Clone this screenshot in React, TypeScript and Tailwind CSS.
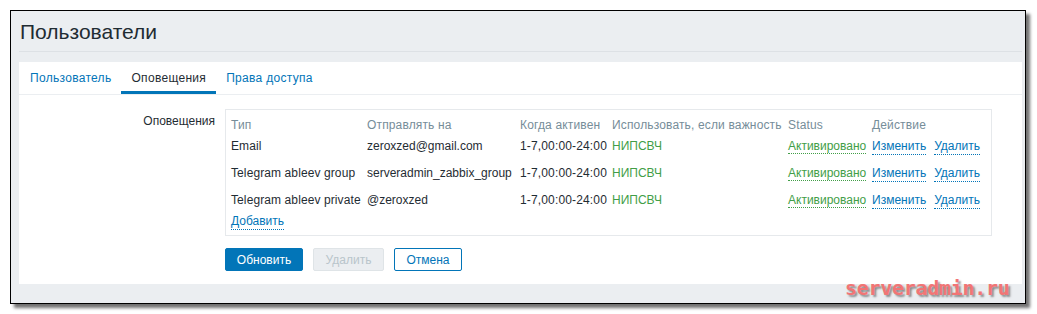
import React from "react";

const rows = [
  { type: "Email", to: "zeroxzed@gmail.com" },
  { type: "Telegram ableev group", to: "serveradmin_zabbix_group" },
  { type: "Telegram ableev private", to: "@zeroxzed" },
];

const dotted = "border-b border-dotted";

export default function App() {
  return (
    <div
      className="relative w-[1037px] h-[314px] bg-white pt-[10px] pl-[10px] text-[12px] text-[#1f2c33]"
      style={{ fontFamily: '"Liberation Sans", Arial, sans-serif' }}
    >
      <div className="w-[1016px] h-[294px] border border-black bg-[#ebeef1] shadow-[4px_4px_3px_rgba(0,0,0,0.55)] pl-[8px] pr-[3px]">
        <div className="h-[41px] flex items-center border-b border-[#dde1e5] pl-[1px]">
          <h1 className="text-[21px] leading-none text-[#1f2c33]">Пользователи</h1>
        </div>
        <div className="mt-[10px] bg-white h-[222px]">
          <div className="flex h-[33px] border-b border-[#ebeef1] pl-[1px] tracking-[0.3px]">
            <div className="px-[10px] flex items-center text-[#0275b8]">Пользователь</div>
            <div className="px-[10px] flex items-center text-[#1f2c33] border-b-[3px] border-[#0275b8] pt-[3px]">
              Оповещения
            </div>
            <div className="px-[10px] flex items-center text-[#0275b8]">Права доступа</div>
          </div>
          <div className="grid grid-cols-[206px_1fr] pt-[14px]">
            <div className="text-right pr-[10px] pt-[5px] leading-[15px]">Оповещения</div>
            <div>
              <div className="w-[767px] border border-[#e6e9ec] pt-[8px] pb-[6px] pl-[5px]">
                <div className="grid grid-cols-[136px_153px_92px_176px_84px_1fr] h-[15px] items-center text-[#768d99] leading-[15px] tracking-[0.15px]">
                  <div>Тип</div>
                  <div>Отправлять на</div>
                  <div>Когда активен</div>
                  <div className="whitespace-nowrap">Использовать, если важность</div>
                  <div>Status</div>
                  <div>Действие</div>
                </div>
                {rows.map((r) => (
                  <div
                    key={r.type}
                    className="grid grid-cols-[136px_153px_92px_176px_84px_1fr] h-[27px] items-center leading-[15px]"
                  >
                    <div className="whitespace-nowrap tracking-[0.1px]">{r.type}</div>
                    <div className="whitespace-nowrap">{r.to}</div>
                    <div className="whitespace-nowrap tracking-[0.15px]">1-7,00:00-24:00</div>
                    <div className="text-[#429e47]">НИПСВЧ</div>
                    <div>
                      <span className={`text-[#429e47] ${dotted} border-[#429e47]`}>Активировано</span>
                    </div>
                    <div className="flex gap-[8px] whitespace-nowrap">
                      <span className={`text-[#0275b8] ${dotted} border-[#0275b8]`}>Изменить</span>
                      <span className={`text-[#0275b8] ${dotted} border-[#0275b8]`}>Удалить</span>
                    </div>
                  </div>
                ))}
                <div className="h-[15px] flex items-center leading-[15px]">
                  <span className={`text-[#0275b8] ${dotted} border-[#0275b8]`}>Добавить</span>
                </div>
              </div>
              <div className="flex gap-[10px] mt-[12px]">
                <button className="w-[78px] h-[23px] rounded-[2px] bg-[#0275b8] text-white border border-[#0275b8]">
                  Обновить
                </button>
                <button className="w-[71px] h-[23px] rounded-[2px] bg-[#ebeef1] text-[#b9c5cb] border border-[#dfe4e7]">
                  Удалить
                </button>
                <button className="w-[68px] h-[23px] rounded-[2px] bg-white text-[#0275b8] border border-[#0275b8]">
                  Отмена
                </button>
              </div>
            </div>
          </div>
        </div>
      </div>
      <div
        className="absolute left-[845px] top-[276px] text-[20px] leading-[24px] font-bold text-[#f27575] tracking-[-0.3px] [text-shadow:2px_2px_2px_rgba(60,60,60,0.55)]"
        style={{ fontFamily: '"DejaVu Sans Mono", monospace' }}
      >
        serveradmin.ru
      </div>
    </div>
  );
}
